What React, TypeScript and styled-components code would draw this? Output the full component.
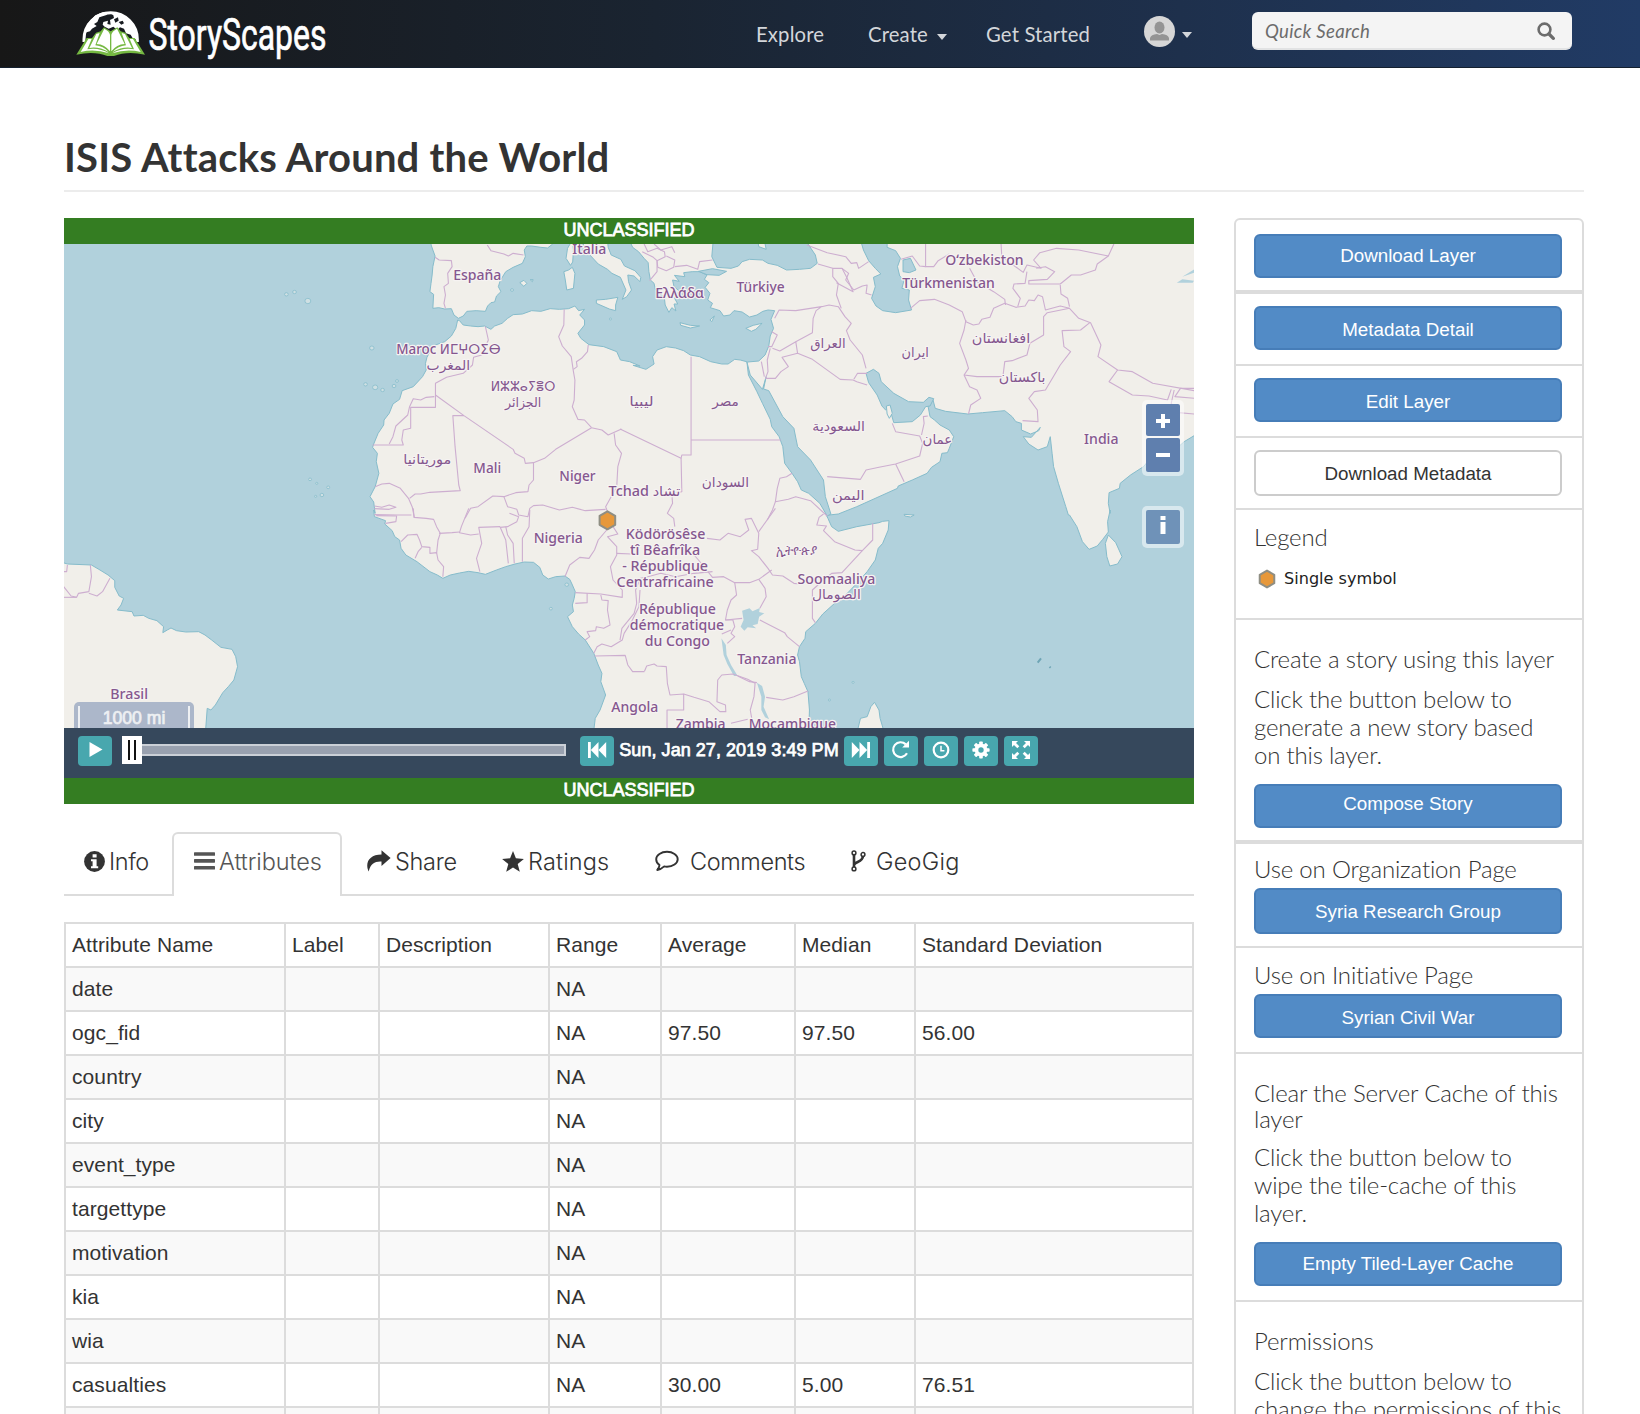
import React from 'react';
import styled, { createGlobalStyle, css } from 'styled-components';

const SANS = `"Liberation Sans", Arial, Helvetica, sans-serif`;
const LATO = `Lato, "Open Sans", sans-serif`;
const LINE = '#dcdcdc';

const GlobalStyle = createGlobalStyle`
  * { box-sizing: border-box; }
  html, body { margin: 0; padding: 0; background: #fff; }
  body { font-family: ${SANS}; color: #333; overflow: hidden; font-variant-ligatures: no-common-ligatures; }
`;

const Page = styled.div`
  width: 1640px;
  height: 1414px;
  overflow: hidden;
  display: flex;
  flex-direction: column;
  background: #fff;
`;

/* ---------- navigation bar ---------- */

const NavBar = styled.header`
  height: 68px;
  flex: none;
  display: flex;
  align-items: flex-start;
  padding-left: 76px;
  background: linear-gradient(90deg, #171717 0%, #1a2431 40%, #1e304c 72%, #213b65 100%);
  border-bottom: 1px solid #14202f;
`;

const Brand = styled.a`
  display: flex;
  width: 680px;
  height: 68px;
`;

const NavLink = styled.a<{ $width: number }>`
  width: ${(p) => p.$width}px;
  display: flex;
  align-items: center;
  padding-top: 1px;
  height: 66px;
  font: 400 20.3px/24px ${LATO};
  letter-spacing: 0.15px;
  color: #d3d6da;
  white-space: nowrap;
`;

const Caret = styled.span`
  width: 0;
  height: 0;
  margin: 7px 0 0 9px;
  border: 5px solid transparent;
  border-top: 6px solid #d3d6da;
  border-bottom: 0;
`;

const UserMenu = styled.div`
  width: 108px;
  display: flex;
  align-items: center;
  height: 63px;
  ${Caret} { margin: 7px 0 0 7px; }
`;

const SearchBox = styled.label`
  width: 320px;
  height: 38px;
  margin-top: 12px;
  padding: 1px 17px 0 13px;
  display: flex;
  align-items: center;
  justify-content: space-between;
  border-radius: 6px;
  background: #f4f4f4;
  border-bottom: 2px solid #e2e3e4;
  color: #6c6c6c;
  font: italic 400 18.6px/36px ${LATO};
  letter-spacing: 0.3px;
`;

/* ---------- page frame ---------- */

const Content = styled.main`
  width: 1520px;
  margin-left: 64px;
  flex: none;
`;

const Title = styled.h1`
  margin: 0;
  height: 124px;
  padding-top: 65px;
  font: 700 40px/48px ${LATO};
  letter-spacing: 0.18px;
  color: #333;
  border-bottom: 2px solid #ececec;
  white-space: nowrap;
`;

const Columns = styled.div`
  margin-top: 26px;
  display: flex;
  gap: 40px;
  align-items: flex-start;
`;

const MainColumn = styled.section`
  width: 1130px;
  flex: none;
`;

/* ---------- map ---------- */

const Banner = styled.div`
  height: 26px;
  padding-top: 1px;
  text-align: center;
  background: #347d22;
  color: #fff;
  font: 400 18px/22px ${SANS};
  -webkit-text-stroke: 0.8px #fff;
`;

const MapView = styled.div`
  position: relative;
  height: 484px;
  overflow: hidden;
  background: #b1d1dc;
  svg { display: block; }
`;

const MapLayer = styled.svg`
  position: absolute;
  inset: 0;
`;

const ControlGroup = styled.div<{ $top: number }>`
  position: absolute;
  top: ${(p) => p.$top}px;
  right: 10px;
  padding: 4px;
  border-radius: 5px;
  background: rgba(255, 255, 255, 0.5);
  display: flex;
  flex-direction: column;
  gap: 2px;
`;

const ControlButton = styled.button<{ $h: number; $tone: string; $drop?: number }>`
  width: 34px;
  height: ${(p) => p.$h}px;
  padding: ${(p) => p.$drop ?? 0}px 0 0;
  border: 0;
  border-radius: 2px;
  display: grid;
  place-items: center;
  background: ${(p) => p.$tone};
`;

const ScaleBar = styled.div`
  position: absolute;
  left: 10px;
  top: 458px;
  width: 120px;
  height: 30px;
  padding: 4px 4px 0;
  border-radius: 5px 5px 0 0;
  background: #acb7ca;
`;

const ScaleInner = styled.div`
  height: 30px;
  padding-top: 1px;
  border: solid #eef0f3;
  border-width: 0 2px;
  text-align: center;
  color: #eef0f3;
  font: 400 17.6px/22px ${SANS};
  -webkit-text-stroke: 0.7px #eef0f3;
`;

const Timeline = styled.div`
  height: 50px;
  padding: 8px 14px 0;
  display: flex;
  background: #36485c;
`;

const ToolButton = styled.button`
  width: 34px;
  height: 30px;
  padding: 0 0 2px;
  border: 0;
  border-radius: 4px;
  display: grid;
  place-items: center;
  background: #48a7ae;
  color: #fff;
  flex: none;
`;

const Slider = styled.div`
  width: 444px;
  height: 28px;
  margin: 0 14px 0 10px;
  display: flex;
  align-items: center;
`;

const SliderHandle = styled.div`
  width: 20px;
  height: 28px;
  display: flex;
  justify-content: center;
  align-items: center;
  gap: 4px;
  background: #fff;
  i { width: 2px; height: 20px; background: #111; }
`;

const SliderTrack = styled.div`
  flex: 1;
  height: 12px;
  border: 2px solid #cbd0d7;
  border-left: 0;
  background: #99a1af;
`;

const Clock = styled.span`
  width: 230px;
  text-align: center;
  color: #fff;
  font: 400 18px/28px ${SANS};
  letter-spacing: 0.05px;
  white-space: nowrap;
  -webkit-text-stroke: 0.75px #fff;
`;

const Tools = styled.div`
  display: flex;
  gap: 6px;
`;

/* ---------- tabs ---------- */

const TabBar = styled.nav`
  margin-top: 28px;
  height: 64px;
  display: flex;
  box-shadow: inset 0 -2px 0 ${LINE};
`;

const Tab = styled.a<{ $width: number; $gap: number; $active?: boolean; $track: number }>`
  width: ${(p) => p.$width}px;
  height: 64px;
  padding: 0 0 5px 20px;
  display: flex;
  align-items: center;
  gap: ${(p) => p.$gap}px;
  font: 300 23.5px/30px Inter, ${SANS};
  letter-spacing: ${(p) => p.$track}px;
  color: #333;
  white-space: nowrap;
  svg { flex: none; margin-bottom: 1px; }
  ${(p) =>
    p.$active &&
    css`
      margin-right: 4px;
      color: #555;
      background: #fff;
      border: 2px solid ${LINE};
      border-bottom: 0;
      border-radius: 6px 6px 0 0;
      padding-bottom: 7px;
    `}
`;

/* ---------- attribute table ---------- */

const Table = styled.table`
  width: 1130px;
  margin-top: 26px;
  table-layout: fixed;
  border-spacing: 0;
  border-top: 2px solid ${LINE};
  border-left: 2px solid ${LINE};
  color: #333;
  font: 400 21px/42px ${SANS};
  letter-spacing: 0.09px;
  th, td {
    height: 44px;
    padding: 0 0 0 6px;
    border: solid ${LINE};
    border-width: 0 2px 2px 0;
    text-align: left;
    font-weight: 400;
    white-space: nowrap;
  }
  tbody tr:nth-child(odd) { background: #f9f9f9; }
`;

/* ---------- sidebar ---------- */

const Sidebar = styled.aside`
  width: 350px;
  border: 2px solid ${LINE};
  border-radius: 6px;
`;

const Panel = styled.section<{ $height: number; $top: number; $rule?: number }>`
  height: ${(p) => p.$height}px;
  padding: ${(p) => p.$top}px 18px 0;
  border-bottom: ${(p) => p.$rule ?? 2}px solid ${LINE};
`;

const Heading = styled.h4<{ $leading?: number }>`
  margin: 0;
  font: 300 24px/${(p) => p.$leading ?? 28}px ${LATO};
  letter-spacing: -0.17px;
  color: #333;
`;

const Copy = styled.p<{ $above?: number; $below?: number }>`
  margin: ${(p) => p.$above ?? 12}px 0 ${(p) => p.$below ?? 15}px;
  width: 308px;
  font: 300 24px/28px ${LATO};
  letter-spacing: -0.2px;
  color: #333;
`;

const Button = styled.button<{ $drop?: number; $plain?: boolean; $height?: number; $above?: number }>`
  width: 308px;
  height: ${(p) => p.$height ?? 44}px;
  margin: ${(p) => p.$above ?? 0}px 0 0;
  padding: ${(p) => p.$drop ?? 11}px 0 0;
  border: 2px solid ${(p) => (p.$plain ? '#cccccc' : '#467db8')};
  border-radius: 6px;
  background: ${(p) => (p.$plain ? '#fff' : '#528bc6')};
  color: ${(p) => (p.$plain ? '#333' : '#fff')};
  font: 400 18.8px/22px ${SANS};
  display: flex;
  justify-content: center;
  align-items: flex-start;
`;

const LegendRow = styled.div`
  display: flex;
  align-items: center;
  gap: 8px;
  margin: 16px 0 0 4px;
  color: #222;
  font: 400 16.1px/24px "DejaVu Sans", sans-serif;
`;

/* ---------- icons ---------- */

const Logo = () => (
  <svg width="270" height="68" viewBox="0 0 270 68">
    <g transform="translate(-12 0) scale(0.33333)">
      <path d="M58 120A82 82 0 0 1 222 120L205 140H75Z" fill="#171b20" />
      <path d="M60 126V118A80 80 0 0 1 220 118V126" fill="none" stroke="#fff" strokeWidth="9" />
      <path d="M64 98L70 72L94 46L118 36L130 44L106 52L100 66L90 72L98 78L84 86L78 94L70 96Z" fill="#fff" />
      <path d="M136 36L164 40L192 54L214 82L222 118L208 118L200 104L186 100L180 86L168 82L160 90L148 80L134 86L122 80L116 74L118 66L132 62L130 72L140 74L138 60L150 54L148 46Z" fill="#fff" />
      <path d="M150 58l12-6 2 10-10 6z M128 52l8-4 2 6-8 4z M164 66l12-4 4 8-8 4z" fill="#171b20" />
      <path d="M37 164L68 114L84 114L96 98L110 94L120 82L140 94L160 82L170 94L184 98L196 114L212 114L243 164Q190 152 150 168H130Q90 152 37 164Z" fill="#76b943" />
      <path d="M50 156L73 117L83 117L70 148Q105 142 135 160Q92 146 50 156Z" fill="#fff" />
      <path d="M230 156L207 117L197 117L210 148Q175 142 145 160Q188 146 230 156Z" fill="#fff" />
      <path d="M76 144L97 102L107 99L94 136Q118 138 134 156Q104 139 76 144Z" fill="#fff" />
      <path d="M204 144L183 102L173 99L186 136Q162 138 146 156Q176 139 204 144Z" fill="#fff" />
      <path d="M98 132L121 86Q136 94 138 104V154Q122 133 98 132Z" fill="#fff" />
      <path d="M182 132L159 86Q144 94 142 104V154Q158 133 182 132Z" fill="#fff" />
    </g>
    <text x="72.500" y="50" fontFamily="Roboto, sans-serif" fontWeight="400" fontSize="43.5" fill="#fff" stroke="#fff" strokeWidth="0.7" textLength="178" lengthAdjust="spacingAndGlyphs">
      StoryScapes
    </text>
  </svg>
);

const Avatar = () => (
  <svg width="31" height="31" viewBox="0 0 31 31">
    <circle cx="15.5" cy="15.5" r="15.5" fill="#d6d6d6" />
    <ellipse cx="15.5" cy="11.5" rx="5" ry="6" fill="#949494" />
    <path d="M6 24.5V22Q7 18.500 13 18L15.500 19L18 18Q24 18.500 25 22V24.500Z" fill="#949494" />
  </svg>
);

const SearchIcon = () => (
  <svg width="18" height="18" viewBox="0 0 18 18" fill="none" stroke="#6c6c6c">
    <circle cx="7.500" cy="7.500" r="5.900" strokeWidth="2.600" />
    <path d="M12 12L16.300 16.300" strokeWidth="3.300" strokeLinecap="round" />
  </svg>
);

const Hexagon = ({ cx, cy, r }: { cx: number; cy: number; r: number }) => {
  const points = [0, 1, 2, 3, 4, 5]
    .map((i) => {
      const a = ((i * 60 - 90) * Math.PI) / 180;
      return `${(cx + r * Math.cos(a)).toFixed(2)},${(cy + r * Math.sin(a)).toFixed(2)}`;
    })
    .join(' ');
  return <polygon points={points} fill="#e7983a" stroke="#8f8e83" strokeWidth="2" strokeLinejoin="round" />;
};

const PlayIcon = () => (
  <svg width="16" height="18" viewBox="0 0 16 18"><path d="M2.500 1L15.500 8.500L2.500 16Z" fill="#fff" /></svg>
);

const StepIcon = ({ forward }: { forward?: boolean }) => (
  <svg width="20" height="18" viewBox="0 0 20 18">
    <g transform={forward ? 'translate(20 0) scale(-1 1)' : undefined} fill="#fff">
      <rect x="1" y="1" width="2.800" height="16" />
      <path d="M11.500 1V17L3.800 9Z" />
      <path d="M19.200 1V17L11.500 9Z" />
    </g>
  </svg>
);

const RepeatIcon = () => (
  <svg width="20" height="20" viewBox="0 0 20 20">
    <path d="M16 13.300A7.400 7.400 0 1 1 14.800 4.400" fill="none" stroke="#fff" strokeWidth="2.200" />
    <path d="M18 .8V7.600H11.200Z" fill="#fff" />
  </svg>
);

const ClockIcon = () => (
  <svg width="18" height="18" viewBox="0 0 18 18" fill="none" stroke="#fff">
    <circle cx="9" cy="9" r="7.300" strokeWidth="2.200" />
    <path d="M9 4.800V9.700H5.600" strokeWidth="1.500" transform="translate(18 0) scale(-1 1)" />
  </svg>
);

const GearIcon = () => (
  <svg width="18" height="18" viewBox="0 0 18 18">
    <g fill="#fff">
      {[0, 45, 90, 135].map((a) => (
        <rect key={a} x="7.200" y=".4" width="3.600" height="17.200" rx=".8" transform={`rotate(${a} 9 9)`} />
      ))}
      <circle cx="9" cy="9" r="6.400" />
    </g>
    <circle cx="9" cy="9" r="2.700" fill="#48a7ae" />
  </svg>
);

const ExpandIcon = () => (
  <svg width="20" height="20" viewBox="0 0 20 20">
    {[0, 90, 180, 270].map((a) => (
      <g key={a} transform={`rotate(${a} 10 10)`}>
        <path d="M1 1H7L1 7Z" fill="#fff" />
        <path d="M3 3L7.300 7.300" stroke="#fff" strokeWidth="2.800" />
      </g>
    ))}
  </svg>
);

const InfoIcon = () => (
  <svg width="21" height="21" viewBox="0 0 21 21">
    <circle cx="10.500" cy="10.500" r="10.400" fill="#333" />
    <path d="M8.600 3.200H12.600V6.400H8.600ZM7 8.200H12.600V15.200H14.200V17.300H7V15.200H8.600V10.300H7Z" fill="#fff" />
  </svg>
);

const MenuIcon = () => (
  <svg width="21" height="18" viewBox="0 0 21 18" fill="#555">
    <rect width="21" height="3.600" y=".2" rx=".6" />
    <rect width="21" height="3.600" y="7.100" rx=".6" />
    <rect width="21" height="3.600" y="14" rx=".6" />
  </svg>
);

const ShareIcon = () => (
  <svg width="25" height="22" viewBox="0 0 25 22">
    <path d="M15.500 .2L24.600 8L15.500 16V11.600C9 11.200 4.600 13.600 2.700 21.500C-1.500 12.500 3.500 4.600 15.500 4.500Z" fill="#333" />
  </svg>
);

const StarIcon = () => (
  <svg width="22" height="21" viewBox="0 0 22 21">
    <path d="M11 0L13.900 7.300L21.900 7.900L15.700 13L17.800 20.800L11 16.500L4.200 20.800L6.300 13L.1 7.900L8.100 7.300Z" fill="#333" />
  </svg>
);

const CommentIcon = () => (
  <svg width="24" height="22" viewBox="0 0 24 22">
    <path d="M12 1.800C17.800 1.800 22.700 5 22.700 9.200S17.800 16.700 12 16.700C11 16.700 10 16.600 9.200 16.400C7 18.400 5 19.700 2.300 20C3.600 18.600 4.300 17.200 4.500 15C2.300 13.600 1.200 11.500 1.200 9.200C1.200 5 6.200 1.800 12 1.800Z" fill="none" stroke="#333" strokeWidth="1.900" strokeLinejoin="round" />
  </svg>
);

const ForkIcon = () => (
  <svg width="16" height="22" viewBox="-1 0 16 22" fill="none" stroke="#333">
    <path d="M3 5V17M3.300 14.500C4.500 11.500 11.800 12 12 6" strokeWidth="2.600" />
    <circle cx="3" cy="2.900" r="1.900" strokeWidth="1.500" fill="#fff" />
    <circle cx="3" cy="18.900" r="1.900" strokeWidth="1.500" fill="#fff" />
    <circle cx="12" cy="4.500" r="1.900" strokeWidth="1.500" fill="#fff" />
  </svg>
);

/* ---------- map geometry, recorded on four sheets ---------- */

type Sheet = 'nw' | 'ne' | 'sw' | 'se';
const ORIGIN: Record<Sheet, [number, number]> = { nw: [0, 0], ne: [1514, 0], sw: [0, 810], se: [1514, 810] };

const pts = (sheet: Sheet, text: string) =>
  text
    .trim()
    .split(/\s+/)
    .map((pair) => {
      const [x, y] = pair.split(',').map(Number);
      return `${x + ORIGIN[sheet][0]},${y + ORIGIN[sheet][1]}`;
    })
    .join(' ');

const MAINLAND = [
  pts('nw', '1015,0 1003,14 1008,30 1014,48 1008,80 1006,105 1003,130 1000,155 1010,163 1008,205 1024,203 1040,207 1058,206 1065,225 1077,235 1090,228 1100,214 1125,212 1150,214 1156,198 1165,188 1175,186 1180,168 1192,155 1185,140 1190,122 1205,95 1225,82 1250,70 1258,50 1255,30 1262,18 1275,18 1300,22 1318,24 1332,12 1335,0 1410,0 1418,22 1430,42 1455,72 1480,88 1492,100 1515,112 1530,150 1520,178 1532,170 1545,150 1537,125 1535,105 1552,108 1568,125'),
  pts('ne', '56,112 40,92 12,78 2,58 -24,45 -32,22 -34,0 25,0 34,22 50,35 65,55 76,68 78,95 82,120 92,130 95,148 108,160 120,175 122,195 132,217 140,203 151,213 146,192 156,192 148,176 152,160 165,158 146,140 142,120 160,124 147,106 175,110 172,98 195,95 215,95 235,105 228,118 240,128 230,142 243,160 237,180 250,190 244,203 270,212 280,228 297,225 308,212 330,216 350,231 370,225 386,214 400,210 418,212 408,238 415,265 406,288 402,318 392,345 375,363 345,366 325,360 310,358 292,372 275,372 245,365 215,350 190,345 172,332 150,324 125,320 100,330 88,350 92,372 70,388 35,376'),
  pts('nw', '1568,378 1540,365 1515,360 1505,335 1470,320 1430,314 1408,295 1400,280 1418,255 1418,240 1405,225 1418,208 1402,212 1392,198 1375,206 1350,208 1325,206 1300,214 1275,212 1250,222 1225,224 1210,235 1195,250 1175,258 1165,268 1148,258 1130,260 1110,258 1090,255 1080,242 1075,240 1070,265 1058,288 1040,305 1015,315 1000,335 992,352 988,370 990,390 980,410 955,440 925,452 918,478 900,492 890,520 876,540 875,555 860,580 848,612 845,622 858,640 855,665 862,700 852,740 838,770 848,786 852,820'),
  pts('sw', '848,0 850,20 880,32 878,42 898,62 905,80 918,90 922,115 935,135 965,155 1000,185 1020,195 1035,205 1055,195 1080,189 1105,184 1130,188 1150,193 1180,180 1205,170 1230,162 1255,156 1280,157 1297,172 1305,195 1320,207 1340,200 1365,198 1378,208 1384,222 1393,245 1390,265 1385,285 1388,305 1372,320 1385,350 1402,372 1420,390 1443,430 1455,465 1465,490 1462,515 1475,555 1460,600 1447,625 1442,670'),
  pts('se', '510,670 512,600 508,545 498,520 490,500 485,455 480,435 485,410 500,385 502,365 528,340 548,312 580,280 610,255 640,220 668,185 690,150 698,115 710,100 725,60 727,32 710,34 700,38 680,42 640,50 590,64 572,50 562,25 555,10'),
  pts('ne', '565,825 590,822 640,800 660,790 700,770 750,745 752,738 790,720 830,700 842,682 865,665 870,640 885,638 890,625 902,590 890,570 865,555 850,540 838,530 832,495 845,475 852,505 880,514 940,522 980,518 1040,512 1060,530 1070,545 1085,550 1085,570 1110,582 1132,572 1136,562 1112,592 1090,590 1105,612 1130,630 1155,620 1163,590 1168,640 1172,680 1185,730 1195,765 1205,800 1212,825'),
  pts('se', '1215,15 1235,50 1250,95 1268,118 1290,108 1305,88 1320,66 1318,35 1325,0'),
  pts('ne', '1325,820 1320,790 1322,758 1350,745 1352,730 1380,705 1415,680 1430,660 1490,640 1525,605 1570,575 1570,0'),
].join(' ');

const SOUTH_AMERICA = pts('sw', '0,155 20,162 85,165 105,178 130,195 148,212 148,232 160,258 172,265 165,285 155,300 195,305 200,318 225,316 240,325 262,332 280,350 278,368 290,360 300,354 315,362 340,366 375,365 392,375 410,390 435,412 465,418 475,440 480,470 470,510 455,530 440,548 420,585 408,600 398,595 393,670 0,670');

const ISLANDS = [
  pts('nw', '1385,0 1372,25 1368,55 1380,76 1386,66 1388,30'),
  pts('nw', '1362,95 1375,90 1385,82 1392,100 1388,145 1370,150 1366,120'),
  pts('nw', '1450,180 1475,178 1508,172 1502,195 1502,212 1485,207 1450,190'),
  pts('nw', '1243,128 1254,121 1262,130 1254,139'),
  pts('nw', '1271,119 1279,119 1277,125'),
  pts('ne', '340,265 360,256 384,250 367,268 355,274'),
  pts('ne', '162,248 190,256 215,258 190,264 164,256'),
  pts('ne', '243,240 255,228 248,245'),
  pts('ne', '720,498 730,495 736,520 728,535 722,522'),
  pts('ne', '768,823 795,825 785,831 770,828'),
  pts('se', '640,670 650,625 668,620 678,590 688,577 700,600 703,625 715,670'),
  pts('se', '1320,75 1340,98 1357,140 1345,162 1324,168 1316,140 1312,100'),
];

const SEAS = [
  pts('ne', '252,0 248,50 262,82 300,85 320,78 330,65 350,58 385,60 400,70 425,76 450,90 485,88 515,85 533,70 528,45 510,15 500,0 390,0 395,28 375,20 372,0'),
  pts('ne', '650,0 658,30 672,62 690,85 705,102 685,112 690,140 680,175 692,198 710,212 745,218 788,210 780,180 782,150 762,145 768,120 756,108 750,80 758,55 745,32 722,22 722,0'),
  pts('ne', '765,60 785,55 800,90 782,98 765,95'),
  pts('ne', '665,400 685,388 700,400 706,425 740,460 780,485 820,487 835,472 848,476 838,498 826,500 812,525 790,545 740,548 734,525 730,498 718,510 708,498 695,465 672,428'),
  pts('ne', '343,366 352,405 385,448 395,410 388,447 402,452 440,530 470,565 480,620 515,660 550,720 555,770 570,822 560,828 540,790 510,760 490,750 480,725 465,700 445,670 440,620 430,590 410,560 406,538 385,490 370,455 347,405'),
  pts('ne', '212,94 250,86 288,94 268,106 235,104'),
];

const LAKES = [
  pts('se', '330,302 350,295 358,304 378,294 376,306 390,310 376,320 372,342 358,346 368,355 345,352 336,362 326,350 334,330'),
  pts('se', '274,385 286,405 288,435 300,465 318,498 308,498 290,462 280,435'),
  pts('se', '370,518 384,528 392,560 388,590 403,628 392,622 382,600 382,560'),
  pts('ne', '1505,128 1520,118 1552,122 1548,128'),
  pts('ne', '1520,110 1552,88 1552,98'),
];

const BORDERS = [
  pts('nw', '1155,15 1165,32 1200,42 1212,48 1225,40 1253,45'),
  pts('nw', '1014,52 1025,60 1058,62 1060,80 1048,100 1050,130 1038,140 1042,165 1038,190 1042,205'),
  pts('nw', '1150,260 1158,300 1140,345 1118,352 1115,375 1090,400 1045,412 1015,430 1015,502 948,502 948,565 928,570 924,600 928,615 845,615'),
  pts('nw', '1012,470 990,472 975,480 955,476 945,500 940,525 908,558 900,590 890,612'),
  pts('nw', '1015,465 1092,527 1225,628 1230,640 1255,655 1258,670 1280,668 1310,655 1340,628 1437,563'),
  pts('nw', '1092,527 1062,527 1068,620 1078,735 1082,752 1000,757 975,762 960,762 945,775'),
  pts('nw', '852,740 870,732 890,730 920,745 942,775 952,800 958,832'),
  pts('nw', '1363,208 1362,255 1348,290 1358,318 1382,350 1388,395 1392,420 1390,480 1385,500 1400,538 1418,540 1437,563'),
  pts('nw', '1428,315 1426,335 1410,355 1396,365 1398,380 1388,388'),
  pts('nw', '1437,563 1465,570 1482,585 1518,567'),
  pts('ne', '0,567 165,655 167,645 192,645 192,350'),
  pts('ne', '192,600 435,600'),
  pts('nw', '1498,580 1502,615 1518,640 1508,680 1505,740 1475,800 1480,815'),
  pts('nw', '1280,668 1280,720 1268,735 1265,755 1232,758 1200,770 1170,768 1130,800 1110,805 1095,835'),
  pts('nw', '1200,770 1210,800 1235,808 1240,825 1265,830 1270,805 1280,797 1305,795 1350,810 1385,802 1420,812 1475,808'),
  pts('nw', '850,798 870,802 890,795 908,802 890,808 850,806'),
  pts('nw', '850,824 912,825 950,825'),
  pts('sw', '955,-5 957,22 990,25 1010,28 1018,50 1028,70 1022,90 1018,130'),
  pts('sw', '855,17 910,18 908,35 880,40'),
  pts('sw', '922,95 940,75 965,73 972,90 978,110 1000,112 1000,130 1018,128 1022,150 1037,170 1035,200'),
  pts('sw', '960,145 968,125 978,112'),
  pts('sw', '1105,-5 1085,50 1080,68 1110,75 1132,72'),
  pts('sw', '1025,70 1060,68 1080,66'),
  pts('sw', '1190,50 1132,52 1140,100 1126,145 1135,185'),
  pts('sw', '1215,10 1240,20 1235,35 1210,50 1190,52 1205,90 1212,160'),
  pts('sw', '1205,50 1210,75 1225,100 1228,160'),
  pts('sw', '1250,155 1250,85 1268,50 1270,0'),
  pts('sw', '1480,20 1478,60 1455,90 1445,120 1430,145 1405,142 1378,165 1365,200'),
  pts('sw', '1495,50 1508,72 1480,80 1505,110 1505,135 1488,170 1495,210 1520,240 1520,262 1462,252 1393,248'),
  pts('sw', '1505,130 1545,132'),
  pts('sw', '1393,280 1425,278 1425,250'),
  pts('sw', '1462,255 1465,270 1482,272 1480,300 1487,345 1470,355 1450,350 1448,362 1425,365 1432,380 1420,390'),
  pts('sw', '1568,240 1565,290 1545,335 1525,370 1520,390 1490,410 1465,402 1452,410 1443,430'),
  pts('sw', '1445,438 1528,436 1535,465 1548,485 1580,485'),
  pts('se', '66,484 72,468 92,462 100,468 125,470 128,520 135,555 172,552 172,600 127,600 127,670'),
  pts('se', '172,552 200,562 240,575 270,605 286,605 285,585 262,575 264,510 275,495 305,492 345,508 365,520 362,560 352,600 360,650'),
  pts('se', '318,498 350,515 370,518'),
  pts('se', '395,562 440,570 470,560 508,543'),
  pts('se', '300,640 345,628'),
  pts('se', '378,330 445,368 452,380 485,410'),
  pts('se', '528,338 520,325 520,240 545,215 572,190 600,188 655,122 683,90 683,40'),
  pts('se', '655,122 635,120 580,95 550,62 558,48 532,45 538,22 550,12'),
  pts('se', '485,222 470,220 440,198 412,195 400,175 375,140 355,122 372,118 375,70 355,25 338,28 348,60 325,80 292,70 270,90 235,85'),
  pts('se', '375,65 420,-5'),
  pts('se', '410,180 375,208 350,218 310,218 280,200 250,202 212,150 200,135'),
  pts('se', '375,208 392,235 395,260 378,295'),
  pts('se', '310,218 315,255 300,270 290,300 285,330 305,330 310,350 300,370 310,380 290,400'),
  pts('se', '285,330 330,325'),
  pts('se', '275,372 300,360'),
  pts('se', '250,185 200,190 150,200 110,190 75,200 55,205 42,240 45,280 38,310 5,355 0,390'),
  pts('ne', '165,655 167,755 140,762 142,790 128,820 145,835 148,860'),
  pts('ne', '420,785 412,810 398,840'),
  pts('ne', '465,700 450,710 432,715 425,745 420,785 455,778 475,770 515,782 560,828'),
  pts('ne', '560,710 650,718 665,690 700,682 745,672 810,648 818,610 810,588 745,575 736,550'),
  pts('ne', '745,672 768,725'),
  pts('ne', '815,585 822,550 820,530 832,528'),
  pts('ne', '393,415 420,415 435,395 455,380 438,352 480,340 520,358 595,418 630,420 640,425 668,435'),
  pts('ne', '632,418 642,400 668,400'),
  pts('ne', '412,325 432,333 475,305 480,340'),
  pts('ne', '475,305 520,278 522,235 530,212 545,200 475,212 430,210 418,235'),
  pts('ne', '406,325 398,360 400,395 393,415'),
  pts('ne', '382,365 390,410'),
  pts('ne', '410,275 425,285 410,320 400,320'),
  pts('ne', '545,200 565,195 590,200 608,230 625,250 612,272 622,300 655,345 665,385'),
  pts('ne', '535,72 575,85 575,110 590,130 585,165 598,205'),
  pts('ne', '575,85 600,85 612,110 630,155 605,140 585,128'),
  pts('ne', '600,85 618,100 610,120 632,150 655,138 668,135 665,160 680,165'),
  pts('ne', '505,15 560,38 610,50 625,70 640,68 645,85 672,65'),
  pts('ne', '785,205 810,182 850,178 890,195 925,215 935,245 955,255 970,252 978,238 1000,232 1010,205 1040,190 1070,202 1095,198 1105,180 1120,182 1130,165 1142,170 1150,210 1190,198 1215,205'),
  pts('ne', '935,240 930,270 918,310 935,360 942,385 930,405 945,440 965,450 975,475 948,495 942,522'),
  pts('ne', '930,405 965,410 1005,410 1035,410 1040,365 1060,362 1100,345 1108,310 1145,285 1145,230 1155,218 1215,205 1240,235 1272,248 1300,315 1292,350 1345,390 1385,395 1440,430 1552,452'),
  pts('ne', '1270,248 1245,270 1195,272 1200,320 1218,335 1190,375 1150,450 1120,455 1105,475 1128,510 1130,545 1088,542'),
  pts('ne', '1345,390 1322,425 1385,465 1430,468 1480,480 1490,448'),
  pts('ne', '1498,450 1490,490 1510,518 1552,522'),
  pts('ne', '1552,445 1515,445 1500,470 1552,475'),
  pts('ne', '826,0 826,80 848,80 860,62 890,42'),
  pts('ne', '760,58 790,48 810,78 826,80'),
  pts('ne', '945,85 965,125 1010,155 1040,178 1042,195'),
  pts('ne', '1030,12 1032,50 1090,97 1100,75 1138,85 1118,60 1135,38 1180,25 1240,30 1320,48 1335,12'),
  pts('ne', '1320,48 1290,72 1285,90 1245,105 1220,105 1190,132 1105,132 1105,122 1155,118 1175,95 1150,80 1125,85'),
  pts('ne', '1190,135 1192,162 1210,175 1215,200'),
  pts('ne', '1075,200 1082,175 1062,145 1065,132 1095,130 1100,95'),
  pts('ne', '60,0 75,35 100,25 120,35 122,50 100,62 102,82 125,92 145,82 148,60 125,48'),
  pts('ne', '60,35 90,52 100,62 100,95 80,122'),
  pts('ne', '148,80 180,76 210,88 215,65 250,60'),
  pts('ne', '92,12 110,30 140,20 148,38'),
  pts('sw', '82,165 85,200 78,245 50,250 45,262 30,258 10,230'),
  pts('sw', '10,262 45,262'),
  pts('sw', '78,250 100,258 115,245 135,205'),
  pts('sw', '10,185 18,185 20,165'),
];

const ISLETS: [number, number, number][] = [
  [612, 163, 5], [634, 156, 5], [670, 183, 8], [843, 324, 6], [826, 433, 5], [852, 442, 7], [872, 450, 5],
  [903, 438, 5], [911, 423, 4], [676, 718, 4], [694, 730, 3], [725, 742, 4], [708, 765, 5], [691, 769, 3],
  [1222, 150, 4], [1370, 1034, 5], [1327, 1106, 4], [1488, 237, 3], [2080, 1380, 3], [2144, 1327, 3],
];

const mapX = (u: number) => u / 2.7034 - 4;
const mapY = (v: number) => v / 3 - 3.3;

const LABELS: [string, number, number, number][] = [
  ['España', 1128, 119, 130], ['Italia', 1431, 41, 92], ['Maroc ⵍⵎⵖⵔⵉⴱ', 1050, 341, 282], ['المغرب', 1050, 388, 118],
  ['ⵍⵣⵣⴰⵢⴻⵔ', 1252, 452, 175], ['الجزائر', 1252, 500, 98], ['موريتانيا', 993, 670, 130], ['Mali', 1155, 696, 75],
  ['Niger', 1399, 722, 98], ['Tchad تشاد', 1580, 767, 194], ['ليبيا', 1572, 495, 66], ['مصر', 1799, 495, 72],
  ['السودان', 1799, 740, 128], ['العراق', 2076, 322, 96], ['ايران', 2312, 350, 74], ['افغانستان', 2544, 307, 158],
  ['باکستان', 2601, 425, 126], ['السعودية', 2105, 572, 142], ['عمان', 2372, 610, 80], ['اليمن', 2131, 777, 88],
  ['Türkiye', 1894, 153, 130], ['Ελλάδα', 1675, 173, 132], ['Oʻzbekiston', 2499, 73, 212], ['Türkmenistan', 2402, 143, 250],
  ['India', 2815, 609, 93], ['Nigeria', 1347, 908, 133], ['Ködörösêse', 1637, 896, 215], ['tî Bêafrîka', 1636, 944, 190],
  ['- République', 1636, 992, 232], ['Centrafricaine', 1636, 1039, 263], ['République', 1669, 1120, 208],
  ['démocratique', 1668, 1167, 255], ['du Congo', 1669, 1215, 176], ['ኢትዮጵያ', 1990, 943, 110], ['Soomaaliya', 2099, 1030, 210],
  ['الصومال', 2099, 1076, 132], ['Tanzania', 1911, 1269, 160], ['Angola', 1554, 1414, 127], ['Zambia', 1732, 1464, 135],
  ['Moçambique', 1980, 1464, 236], ['Brasil', 187, 1376, 102],
];

const WorldMap = () => (
  <>
    <MapLayer width="1130" height="484" viewBox="10.8 12 3054.8 1452" preserveAspectRatio="none">
      <g fill="#f1efea" stroke="#86bccb" strokeWidth="1" strokeLinejoin="round">
        <polygon points={MAINLAND} vectorEffect="non-scaling-stroke" />
        <polygon points={SOUTH_AMERICA} vectorEffect="non-scaling-stroke" />
      </g>
      <g fill="#b1d1dc" stroke="#86bccb" strokeWidth="1">
        {SEAS.map((p) => <polygon key={p} points={p} vectorEffect="non-scaling-stroke" />)}
      </g>
      <g fill="#b1d1dc">
        {LAKES.map((p) => <polygon key={p} points={p} />)}
      </g>
      <g fill="none" stroke="#cdaed0" strokeWidth="1.1" strokeLinejoin="round">
        {BORDERS.map((p) => <polyline key={p} points={p} vectorEffect="non-scaling-stroke" />)}
      </g>
      <g fill="#f1efea" stroke="#86bccb" strokeWidth="1">
        {ISLANDS.map((p) => <polygon key={p} points={p} vectorEffect="non-scaling-stroke" />)}
        {ISLETS.map(([x, y, r]) => (
          <ellipse key={`${x}-${y}`} cx={x} cy={y} rx={r} ry={r} fill="#cfe0e3" vectorEffect="non-scaling-stroke" strokeWidth=".8" />
        ))}
      </g>
      <path d="M2643 1268L2652 1255M2675 1280L2678 1283" stroke="#6fa5b5" strokeWidth="2" vectorEffect="non-scaling-stroke" />
    </MapLayer>
    <MapLayer width="1130" height="484" viewBox="0 0 1130 484">
      <g
        fill="#85578f"
        stroke="#f6f3f2"
        strokeWidth="2.4"
        strokeLinejoin="round"
        paintOrder="stroke"
        fontFamily={'"Noto Sans", "DejaVu Sans", sans-serif'}
        fontSize="13.8"
        fontWeight="500"
        textAnchor="middle"
      >
        {LABELS.map(([name, u, v, w]) => (
          <text key={name + v} x={mapX(u)} y={mapY(v)} textLength={w / 2.7034} lengthAdjust="spacingAndGlyphs">
            {name}
          </text>
        ))}
      </g>
      <Hexagon cx={543.4} cy={276.3} r={9} />
    </MapLayer>
  </>
);

/* ---------- data ---------- */

const COLUMNS: [string, number][] = [
  ['Attribute Name', 220], ['Label', 94], ['Description', 170], ['Range', 112], ['Average', 134], ['Median', 120], ['Standard Deviation', 278],
];

const ROWS: string[][] = [
  ['date', '', '', 'NA', '', '', ''],
  ['ogc_fid', '', '', 'NA', '97.50', '97.50', '56.00'],
  ['country', '', '', 'NA', '', '', ''],
  ['city', '', '', 'NA', '', '', ''],
  ['event_type', '', '', 'NA', '', '', ''],
  ['targettype', '', '', 'NA', '', '', ''],
  ['motivation', '', '', 'NA', '', '', ''],
  ['kia', '', '', 'NA', '', '', ''],
  ['wia', '', '', 'NA', '', '', ''],
  ['casualties', '', '', 'NA', '30.00', '5.00', '76.51'],
  ['', '', '', '', '', '', ''],
];

export default function App() {
  return (
    <Page>
      <GlobalStyle />
      <NavBar>
        <Brand><Logo /></Brand>
        <NavLink $width={112}>Explore</NavLink>
        <NavLink $width={118}>Create<Caret /></NavLink>
        <NavLink $width={158}>Get Started</NavLink>
        <UserMenu><Avatar /><Caret /></UserMenu>
        <SearchBox>Quick Search<SearchIcon /></SearchBox>
      </NavBar>

      <Content>
        <Title>ISIS Attacks Around the World</Title>
        <Columns>
          <MainColumn>
            <Banner>UNCLASSIFIED</Banner>
            <MapView>
              <WorldMap />
              <ControlGroup $top={156}>
                <ControlButton $h={32} $tone="#5f7fae" $drop={2}>
                  <svg width="14" height="14" viewBox="0 0 14 14"><path d="M7 0V14M0 7H14" stroke="#fff" strokeWidth="4" /></svg>
                </ControlButton>
                <ControlButton $h={34} $tone="#5f7fae">
                  <svg width="14" height="14" viewBox="0 0 14 14"><path d="M0 7H14" stroke="#fff" strokeWidth="4" /></svg>
                </ControlButton>
              </ControlGroup>
              <ControlGroup $top={262}>
                <ControlButton $h={34} $tone="#6f92b8">
                  <svg width="6" height="22" viewBox="0 0 6 22"><path d="M.5 0H5.500V4H.5ZM.5 6H5.500V18H.5Z" fill="#fff" /></svg>
                </ControlButton>
              </ControlGroup>
              <ScaleBar><ScaleInner>1000 mi</ScaleInner></ScaleBar>
            </MapView>
            <Timeline>
              <ToolButton><PlayIcon /></ToolButton>
              <Slider>
                <SliderHandle><i /><i /></SliderHandle>
                <SliderTrack />
              </Slider>
              <ToolButton><StepIcon /></ToolButton>
              <Clock>Sun, Jan 27, 2019 3:49 PM</Clock>
              <Tools>
                <ToolButton><StepIcon forward /></ToolButton>
                <ToolButton><RepeatIcon /></ToolButton>
                <ToolButton><ClockIcon /></ToolButton>
                <ToolButton><GearIcon /></ToolButton>
                <ToolButton><ExpandIcon /></ToolButton>
              </Tools>
            </Timeline>
            <Banner>UNCLASSIFIED</Banner>

            <TabBar>
              <Tab $width={108} $gap={4} $track={-0.4}><InfoIcon />Info</Tab>
              <Tab $width={170} $gap={4} $track={-0.1} $active><MenuIcon />Attributes</Tab>
              <Tab $width={136} $gap={4} $track={-0.3}><ShareIcon />Share</Tab>
              <Tab $width={153} $gap={4} $track={0.15}><StarIcon />Ratings</Tab>
              <Tab $width={195} $gap={11} $track={-0.4}><CommentIcon />Comments</Tab>
              <Tab $width={140} $gap={10} $track={0.25}><ForkIcon />GeoGig</Tab>
            </TabBar>

            <Table>
              <colgroup>{COLUMNS.map(([name, w]) => <col key={name} width={w} />)}</colgroup>
              <thead>
                <tr>{COLUMNS.map(([name]) => <th key={name}>{name}</th>)}</tr>
              </thead>
              <tbody>
                {ROWS.map((row, r) => (
                  <tr key={r}>{row.map((cell, c) => <td key={c}>{cell}</td>)}</tr>
                ))}
              </tbody>
            </Table>
          </MainColumn>

          <Sidebar>
            <Panel $height={74} $top={14} $rule={4}><Button $drop={9}>Download Layer</Button></Panel>
            <Panel $height={72} $top={12}><Button>Metadata Detail</Button></Panel>
            <Panel $height={72} $top={12}><Button>Edit Layer</Button></Panel>
            <Panel $height={72} $top={12}><Button $plain $height={46}>Download Metadata</Button></Panel>
            <Panel $height={110} $top={13}>
              <Heading>Legend</Heading>
              <LegendRow>
                <svg width="18" height="20" viewBox="0 0 18 20"><Hexagon cx={9} cy={10} r={8.4} /></svg>
                Single symbol
              </LegendRow>
            </Panel>
            <Panel $height={224} $top={25} $rule={4}>
              <Heading>Create a story using this layer</Heading>
              <Copy>Click the button below to generate a new story based on this layer.</Copy>
              <Button $drop={7}>Compose Story</Button>
            </Panel>
            <Panel $height={104} $top={11}>
              <Heading>Use on Organization Page</Heading>
              <Button $height={46} $above={5}>Syria Research Group</Button>
            </Panel>
            <Panel $height={106} $top={13}>
              <Heading>Use on Initiative Page</Heading>
              <Button $above={5}>Syrian Civil War</Button>
            </Panel>
            <Panel $height={248} $top={26}>
              <Heading $leading={26}>Clear the Server Cache of this layer</Heading>
              <Copy $above={11}>Click the button below to wipe the tile-cache of this layer.</Copy>
              <Button $drop={9}>Empty Tiled-Layer Cache</Button>
            </Panel>
            <Panel $height={248} $top={25}>
              <Heading>Permissions</Heading>
              <Copy>Click the button below to change the permissions of this layer.</Copy>
            </Panel>
          </Sidebar>
        </Columns>
      </Content>
    </Page>
  );
}
